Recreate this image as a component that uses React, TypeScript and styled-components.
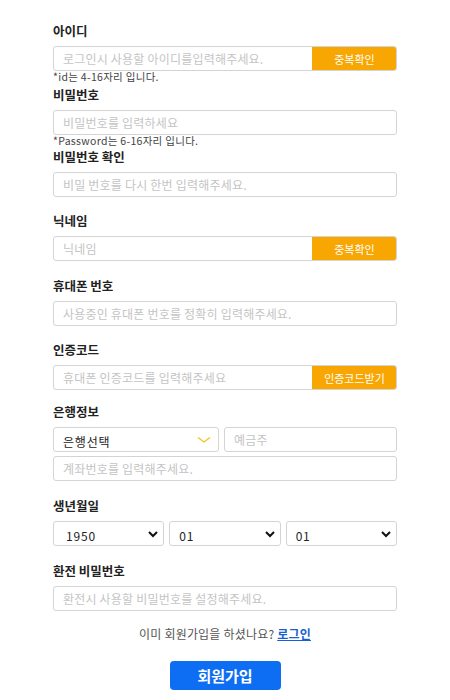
import React from "react";
import styled, { createGlobalStyle } from "styled-components";

const Global = createGlobalStyle`
  html, body { margin: 0; padding: 0; background: #fff; }
  body { font-family: "Noto Sans CJK KR", "Noto Sans", sans-serif; color: #222; }
  * { box-sizing: border-box; }
  input::placeholder { color: #c4c4c4; }
`;

const Form = styled.form`
  width: 344px;
  margin: 0 auto;
  padding-top: 23px;
  display: flex;
  flex-direction: column;
`;

const Field = styled.div<{ $after: number }>`
  display: flex;
  flex-direction: column;
  margin-bottom: ${(p) => p.$after}px;
`;

const Label = styled.label`
  font-size: 12.5px;
  font-weight: 700;
  line-height: 16px;
  color: #222;
  margin-bottom: 7px;
`;

const Note = styled.div`
  font-size: 10.5px;
  line-height: 12px;
  letter-spacing: 0.3px;
  color: #444;
`;

const Box = styled.div`
  display: flex;
  height: 25px;
  border: 1px solid #d4d4d4;
  border-radius: 3px;
  overflow: hidden;
  background: #fff;
`;

const TextInput = styled.input`
  flex: 1;
  min-width: 0;
  border: none;
  outline: none;
  padding: 0 9px;
  font-family: inherit;
  font-size: 12px;
  letter-spacing: 0.2px;
  color: #333;
  background: transparent;
`;

const SideButton = styled.button`
  width: 85px;
  border: none;
  margin: -1px -1px -1px 0;
  padding: 0;
  background: #f8a602;
  color: #fff;
  font-family: inherit;
  font-size: 11px;
  cursor: pointer;
`;

const Row = styled.div<{ $cols: string }>`
  display: grid;
  grid-template-columns: ${(p) => p.$cols};
  gap: 5px;
`;

const Stack = styled.div`
  display: flex;
  flex-direction: column;
  gap: 4px;
`;

const SelectBox = styled.div`
  position: relative;
  height: 25px;
  border: 1px solid #d4d4d4;
  border-radius: 3px;
  background: #fff;
`;

const Select = styled.select<{ $pad: number }>`
  appearance: none;
  width: 100%;
  height: 100%;
  border: none;
  outline: none;
  background: transparent;
  padding: 0 ${(p) => p.$pad}px;
  font-family: inherit;
  font-size: 12px;
  letter-spacing: 0.8px;
  color: #222;
`;

const Chevron = styled.svg<{ $right: number }>`
  position: absolute;
  right: ${(p) => p.$right}px;
  top: 50%;
  transform: translateY(-50%);
  pointer-events: none;
`;

const Footer = styled.div`
  display: flex;
  flex-direction: column;
  align-items: center;
  margin-top: 16px;
`;

const Already = styled.p`
  margin: 0;
  font-size: 12px;
  line-height: 14px;
  letter-spacing: 0.2px;
  color: #555;
`;

const LoginLink = styled.a`
  color: #1a5fd1;
  font-weight: 700;
  text-decoration: underline;
`;

const Submit = styled.button`
  margin-top: 20px;
  width: 111px;
  height: 29px;
  border: none;
  border-radius: 4px;
  background: #0d6ef3;
  color: #fff;
  font-family: inherit;
  font-size: 15px;
  font-weight: 700;
`;

const ThinChevron = () => (
  <Chevron $right={6} width="16" height="10" viewBox="0 0 16 10">
    <path d="M2 2.5 L8 7 L14 2.5" fill="none" stroke="#f6c21c" strokeWidth="1.3" />
  </Chevron>
);

const BoldChevron = () => (
  <Chevron $right={4} width="12" height="8" viewBox="0 0 12 8">
    <path d="M2 2 L6 6 L10 2" fill="none" stroke="#111" strokeWidth="2" />
  </Chevron>
);

const InputField = ({
  label,
  placeholder,
  button,
  note,
  after,
}: {
  label: string;
  placeholder: string;
  button?: string;
  note?: string;
  after: number;
}) => (
  <Field $after={after}>
    <Label>{label}</Label>
    <Box>
      <TextInput placeholder={placeholder} />
      {button && <SideButton type="button">{button}</SideButton>}
    </Box>
    {note && <Note>{note}</Note>}
  </Field>
);

export default function App() {
  return (
    <>
      <Global />
      <Form onSubmit={(e) => e.preventDefault()}>
        <InputField
          label="아이디"
          placeholder="로그인시 사용할 아이디를입력해주세요."
          button="중복확인"
          note="*id는 4-16자리 입니다."
          after={4}
        />
        <InputField
          label="비밀번호"
          placeholder="비밀번호를 입력하세요"
          note="*Password는 6-16자리 입니다."
          after={2}
        />
        <InputField label="비밀번호 확인" placeholder="비밀 번호를 다시 한번 입력해주세요." after={16} />
        <InputField label="닉네임" placeholder="닉네임" button="중복확인" after={17} />
        <InputField
          label="휴대폰 번호"
          placeholder="사용중인 휴대폰 번호를 정확히 입력해주세요."
          after={16}
        />
        <InputField
          label="인증코드"
          placeholder="휴대폰 인증코드를 입력해주세요"
          button="인증코드받기"
          after={14}
        />
        <Field $after={17}>
          <Label>은행정보</Label>
          <Stack>
            <Row $cols="166px 1fr">
              <SelectBox>
                <Select $pad={9} defaultValue="">
                  <option value="">은행선택</option>
                </Select>
                <ThinChevron />
              </SelectBox>
              <Box>
                <TextInput placeholder="예금주" />
              </Box>
            </Row>
            <Box>
              <TextInput placeholder="계좌번호를 입력해주세요." />
            </Box>
          </Stack>
        </Field>
        <Field $after={17}>
          <Label>생년월일</Label>
          <Row $cols="1fr 1fr 1fr">
            <SelectBox>
              <Select $pad={12} defaultValue="1950">
                <option>1950</option>
              </Select>
              <BoldChevron />
            </SelectBox>
            <SelectBox>
              <Select $pad={9} defaultValue="01">
                <option>01</option>
              </Select>
              <BoldChevron />
            </SelectBox>
            <SelectBox>
              <Select $pad={9} defaultValue="01">
                <option>01</option>
              </Select>
              <BoldChevron />
            </SelectBox>
          </Row>
        </Field>
        <InputField label="환전 비밀번호" placeholder="환전시 사용할 비밀번호를 설정해주세요." after={0} />
        <Footer>
          <Already>
            이미 회원가입을 하셨나요? <LoginLink href="#">로그인</LoginLink>
          </Already>
          <Submit type="submit">회원가입</Submit>
        </Footer>
      </Form>
    </>
  );
}
